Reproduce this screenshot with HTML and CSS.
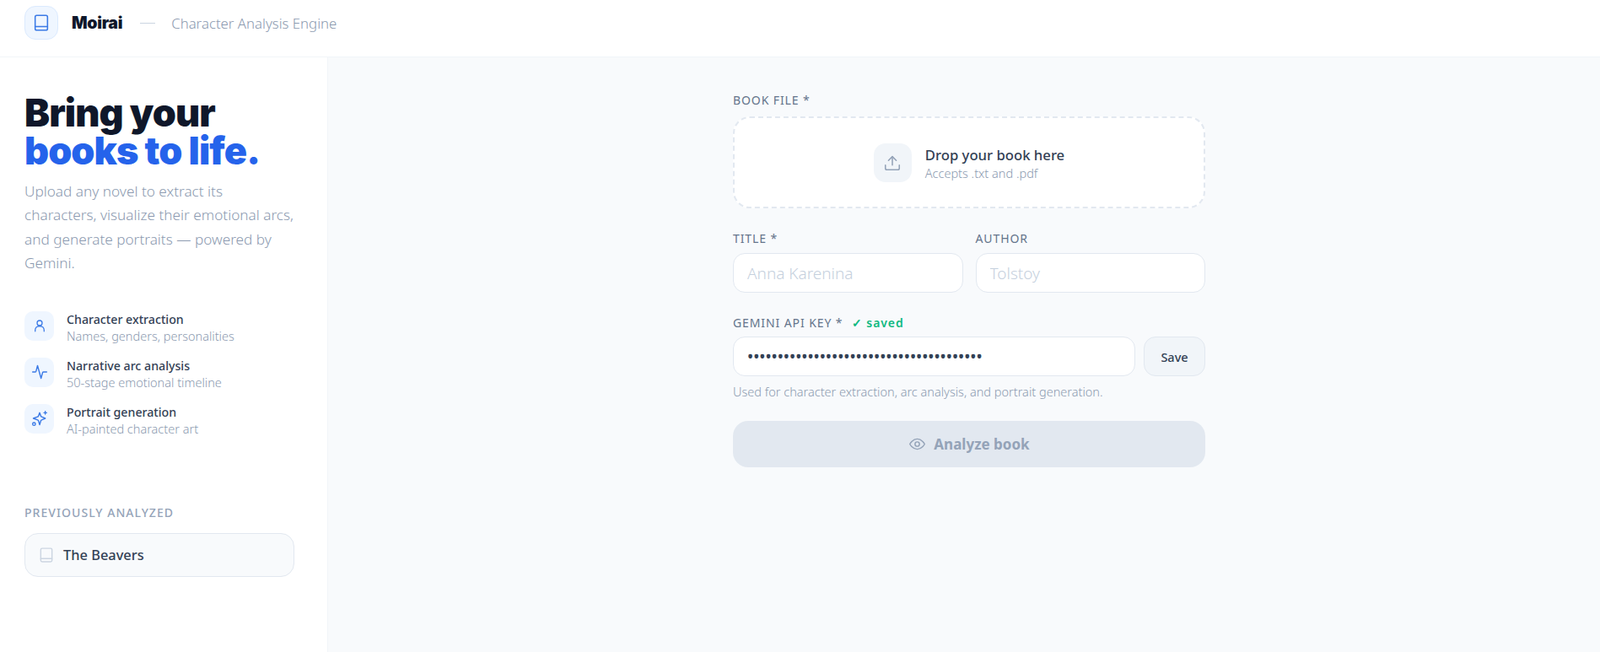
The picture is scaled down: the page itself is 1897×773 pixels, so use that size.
FILE: index.html
```html
<!DOCTYPE html>
<html lang="en">
<head>
  <meta charset="UTF-8" />
  <meta name="viewport" content="width=device-width, initial-scale=1.0"/>
  <title>Moirai</title>
  <link rel="stylesheet" href="styles.css">
</head>
<body>

  <header class="topbar">
    <div class="logo">
      <svg class="icon" width="22" height="22" viewBox="0 0 24 24"><rect x="4" y="2.500" width="16" height="19" rx="2"/><path d="M4 17h16"/></svg>
    </div>
    <span class="brand">Moirai</span>
    <span class="brand-sep"></span>
    <span class="brand-sub">Character Analysis Engine</span>
  </header>

  <div class="layout">
    <aside class="sidebar">
      <h1 class="hero">Bring your<br><span class="hero-accent">books to life.</span></h1>
      <p class="intro">Upload any novel to extract its<br>characters, visualize their emotional arcs,<br>and generate portraits — powered by<br>Gemini.</p>

      <ul class="features">
        <li class="feature">
          <div class="feature-icon">
            <svg class="icon" width="18" height="18" viewBox="0 0 24 24"><circle cx="12" cy="8" r="4"/><path d="M5 21v-2a6 6 0 0 1 6-6h2a6 6 0 0 1 6 6v2"/></svg>
          </div>
          <div>
            <div class="feature-title">Character extraction</div>
            <div class="feature-sub">Names, genders, personalities</div>
          </div>
        </li>
        <li class="feature">
          <div class="feature-icon">
            <svg class="icon" width="20" height="20" viewBox="0 0 24 24"><path d="M2 12h3.500a1.500 1.500 0 0 0 1.400-1L9 3l5 18 2.200-8a1.500 1.500 0 0 1 1.400-1H22"/></svg>
          </div>
          <div>
            <div class="feature-title">Narrative arc analysis</div>
            <div class="feature-sub">50-stage emotional timeline</div>
          </div>
        </li>
        <li class="feature">
          <div class="feature-icon">
            <svg class="icon" width="20" height="20" viewBox="0 0 24 24"><path d="M12 4l1.700 4.600a2 2 0 0 0 1.200 1.200L20 12l-5.100 2.200a2 2 0 0 0-1.200 1.200L12 21l-1.700-5.600a2 2 0 0 0-1.200-1.200L3 12l6.100-2.200a2 2 0 0 0 1.200-1.200z"/><path d="M20 2v4M22 4h-4"/><circle cx="4" cy="20" r="2"/></svg>
          </div>
          <div>
            <div class="feature-title">Portrait generation</div>
            <div class="feature-sub">AI-painted character art</div>
          </div>
        </li>
      </ul>

      <div class="prev-label">Previously analyzed</div>
      <div class="prev-card">
        <svg class="icon" width="20" height="20" viewBox="0 0 24 24"><rect x="4" y="2.500" width="16" height="19" rx="2"/><path d="M4 17h16"/></svg>
        <span>The Beavers</span>
      </div>
    </aside>

    <main class="main">
      <form class="form">
        <label class="field-label">Book file *</label>
        <div class="dropzone">
          <div class="drop-icon">
            <svg class="icon" width="22" height="22" viewBox="0 0 24 24"><path d="M12 15V4"/><path d="M7 9l5-5 5 5"/><path d="M3 15v4a2 2 0 0 0 2 2h14a2 2 0 0 0 2-2v-4"/></svg>
          </div>
          <div>
            <div class="drop-title">Drop your book here</div>
            <div class="drop-sub">Accepts .txt and .pdf</div>
          </div>
        </div>

        <div class="row-two">
          <div>
            <label class="field-label field-label-tight">Title *</label>
            <input class="input" type="text" placeholder="Anna Karenina">
          </div>
          <div>
            <label class="field-label field-label-tight">Author</label>
            <input class="input" type="text" placeholder="Tolstoy">
          </div>
        </div>

        <label class="field-label key-label">Gemini API key * <span class="saved">✓ saved</span></label>
        <div class="key-row">
          <input class="input" type="password" value="abcdefghijklmnopqrstuvwxyzabcdefghijklm">
          <button class="save-btn" type="button">Save</button>
        </div>
        <p class="hint">Used for character extraction, arc analysis, and portrait generation.</p>

        <button class="analyze-btn" type="button" disabled>
          <svg class="icon" width="21" height="21" viewBox="0 0 24 24"><path d="M2 12s3.600-7 10-7 10 7 10 7-3.600 7-10 7-10-7-10-7z"/><circle cx="12" cy="12" r="3"/></svg>
          Analyze book
        </button>
      </form>
    </main>
  </div>

</body>
</html>
```

FILE: styles.css
```css
* {
  box-sizing: border-box;
}

body {
  margin: 0;
  height: 773px;
  overflow: hidden;
  background: #fff;
  font-family: "Noto Sans", sans-serif;
  color: #0f172a;
  display: flex;
  flex-direction: column;
}

.icon {
  fill: none;
  stroke: currentColor;
  stroke-width: 1.7;
  stroke-linecap: round;
  stroke-linejoin: round;
  flex-shrink: 0;
}

/* top bar */
.topbar {
  height: 68px;
  flex-shrink: 0;
  display: flex;
  align-items: center;
  padding: 7px 29px 20px;
  border-bottom: 1px solid #f1f5f9;
}

.logo {
  width: 40px;
  height: 40px;
  border-radius: 13px;
  background: #eff6ff;
  border: 1px solid #dbeafe;
  color: #3b7ae6;
  display: flex;
  align-items: center;
  justify-content: center;
  margin-right: 16px;
}

.brand {
  font-family: Inter, sans-serif;
  font-size: 19.500px;
  font-weight: 900;
  letter-spacing: -0.3px;
}

.brand-sep {
  width: 18px;
  height: 1px;
  background: #cbd5e1;
  margin: 0 19px 0 21px;
}

.brand-sub {
  font-size: 16.800px;
  font-weight: 300;
  color: #8c9ab0;
}

.layout {
  flex: 1;
  display: flex;
  min-height: 0;
}

/* sidebar */
.sidebar {
  width: 389px;
  flex-shrink: 0;
  padding: 43px 39px 0 29px;
  border-right: 1px solid #f1f5f9;
}

.hero {
  margin: 0;
  font-family: Inter, sans-serif;
  font-size: 45px;
  font-weight: 900;
  line-height: 45px;
  letter-spacing: -0.9px;
}

.hero-accent {
  color: #2563eb;
}

.intro {
  margin: 12px 0 0;
  font-size: 17.200px;
  font-weight: 300;
  line-height: 28.400px;
  white-space: nowrap;
  color: #8c9ab0;
}

.features {
  list-style: none;
  margin: 42px 0 0;
  padding: 0;
  display: flex;
  flex-direction: column;
  gap: 20px;
}

.feature {
  display: flex;
  gap: 15px;
  height: 35px;
}

.feature-icon {
  width: 35px;
  height: 35px;
  border-radius: 10px;
  background: #eff6ff;
  color: #3b7ae6;
  display: flex;
  align-items: center;
  justify-content: center;
  flex-shrink: 0;
}

.feature-title {
  font-size: 14.200px;
  font-weight: 500;
  line-height: 19px;
  color: #334155;
}

.feature-sub {
  font-size: 14.500px;
  font-weight: 300;
  line-height: 21px;
  color: #8c9ab0;
}

.prev-label {
  margin-top: 84px;
  font-size: 14px;
  font-weight: 500;
  letter-spacing: 1.050px;
  text-transform: uppercase;
  color: #94a3b8;
}

.prev-card {
  margin-top: 15px;
  width: 320px;
  height: 52px;
  display: flex;
  align-items: center;
  gap: 10px;
  padding: 0 15px;
  background: #f8fafc;
  border: 1px solid #e2e8f0;
  border-radius: 16px;
  font-size: 16.400px;
  font-weight: 500;
  color: #334155;
}

.prev-card .icon {
  color: #cbd5e1;
}

/* main form */
.main {
  flex: 1;
  background: #f8fafc;
  padding: 41px 0 0 12px;
  display: flex;
  justify-content: center;
}

.form {
  width: 560px;
}

.field-label {
  display: block;
  font-size: 14px;
  font-weight: 400;
  letter-spacing: 0.9px;
  text-transform: uppercase;
  color: #64748b;
  line-height: 20px;
  margin-bottom: 9px;
}

.field-label-tight {
  margin-bottom: 7px;
}

.dropzone {
  height: 109px;
  background: #fff;
  border: 2px dashed #e2e8f0;
  border-radius: 20px;
  display: flex;
  align-items: center;
  justify-content: center;
  gap: 16px;
}

.drop-icon {
  width: 45px;
  height: 46px;
  border-radius: 14px;
  background: #f1f5f9;
  color: #94a3b8;
  display: flex;
  align-items: center;
  justify-content: center;
}

.drop-title {
  font-size: 16.700px;
  font-weight: 500;
  line-height: 24px;
  color: #334155;
}

.drop-sub {
  font-size: 14.500px;
  font-weight: 300;
  line-height: 18px;
  color: #8c9ab0;
}

.row-two {
  margin-top: 26px;
  display: flex;
  gap: 15px;
}

.row-two > div {
  flex: 1;
}

.input {
  display: block;
  width: 100%;
  height: 47px;
  padding: 0 16px;
  background: #fff;
  border: 1px solid #e2e8f0;
  border-radius: 14px;
  font-family: inherit;
  font-size: 19px;
  font-weight: 300;
  color: #334155;
  outline: none;
}

.input::placeholder {
  color: #c5d0dd;
}

.key-label {
  margin-top: 26px;
  margin-bottom: 6px;
}

.saved {
  margin-left: 6px;
  font-size: 14px;
  font-weight: 600;
  text-transform: none;
  color: #10b981;
}

.key-row {
  display: flex;
  gap: 10px;
}

.key-row .input {
  flex: 1;
  font-weight: 500;
}

.save-btn {
  width: 73px;
  height: 47px;
  background: #f1f5f9;
  border: 1px solid #e2e8f0;
  border-radius: 14px;
  font-family: inherit;
  font-size: 14.500px;
  font-weight: 500;
  color: #334155;
}

.hint {
  margin: 8px 0 0;
  font-size: 14.500px;
  font-weight: 300;
  line-height: 20px;
  color: #8c9ab0;
}

.analyze-btn {
  margin-top: 25px;
  width: 100%;
  height: 55px;
  background: #e2e8f0;
  border: none;
  border-radius: 18px;
  font-family: inherit;
  font-size: 17px;
  font-weight: 700;
  color: #94a3b8;
  display: flex;
  align-items: center;
  justify-content: center;
  gap: 9px;
}
```
